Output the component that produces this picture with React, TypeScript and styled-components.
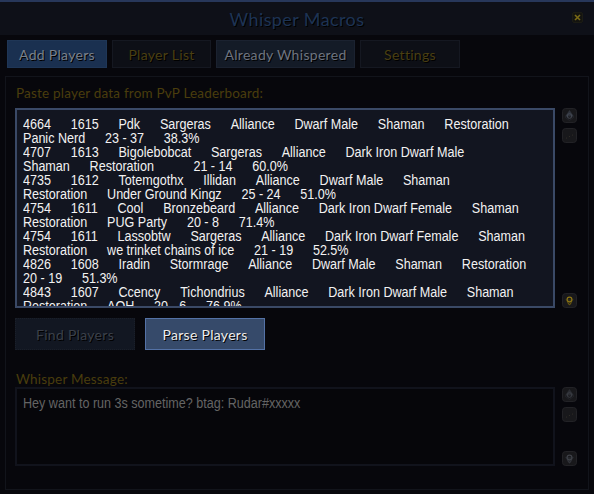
import styled, { createGlobalStyle } from 'styled-components';

const GlobalStyle = createGlobalStyle`
  html, body {
    margin: 0;
    padding: 0;
    background: #07070c;
  }
`;

const uiFont = `Lato, "Open Sans", sans-serif`;
const editFont = `"Liberation Sans", Arial, sans-serif`;

const Frame = styled.div`
  width: 594px;
  height: 494px;
  display: flex;
  flex-direction: column;
  background: #07070c;
  font-family: ${uiFont};
  overflow: hidden;
`;

const TitleBar = styled.div`
  height: 33px;
  border-top: 2px solid #27375a;
  background: #0e1018;
  display: grid;
  grid-template-columns: 1fr auto 1fr;
  align-items: center;
`;

const Title = styled.h1`
  grid-column: 2;
  margin: 0;
  font-size: 18px;
  font-weight: 400;
  letter-spacing: 0.4px;
  color: #1d3354;
  text-shadow: 1px 1px 0 #000;
`;

const CloseBtn = styled.button`
  grid-column: 3;
  justify-self: end;
  margin-right: 11px;
  margin-top: -2px;
  width: 11px;
  height: 11px;
  padding: 0;
  border: 1px solid #1c1c14;
  border-radius: 2px;
  background: #141410;
  display: flex;
  align-items: center;
  justify-content: center;
  svg {
    display: block;
  }
`;

const TabRow = styled.div`
  display: flex;
  gap: 5px;
  padding: 5px 0 0 7px;
`;

const Tab = styled.div<{ $active?: boolean; $muted?: boolean; $w: number }>`
  width: ${(p) => p.$w}px;
  height: 28px;
  box-sizing: border-box;
  display: flex;
  align-items: center;
  justify-content: center;
  font-size: 14px;
  letter-spacing: 0.3px;
  border: 1px solid
    ${(p) => (p.$active ? '#1f3656' : p.$muted ? '#1b2230' : '#151821')};
  background: ${(p) => (p.$active ? '#1a3050' : p.$muted ? '#141b27' : '#0d0f16')};
  color: ${(p) => (p.$active ? '#7a808b' : p.$muted ? '#6e7480' : '#4a3f12')};
  text-shadow: 1px 1px 0 #000;
`;

const Panel = styled.div`
  margin: 8px 5px 0 5px;
  height: 414px;
  box-sizing: border-box;
  border: 1px solid #12141b;
  padding: 9px 11px 0 9px;
  display: flex;
  flex-direction: column;
`;

const Label = styled.div<{ $gap?: number }>`
  margin-top: ${(p) => p.$gap ?? 0}px;
  height: 14px;
  line-height: 14px;
  padding-left: 1px;
  font-size: 13.5px;
  letter-spacing: 0.2px;
  color: #4a3d0d;
`;

const EditorRow = styled.div<{ $top: number; $h: number }>`
  margin-top: ${(p) => p.$top}px;
  height: ${(p) => p.$h}px;
  display: flex;
  gap: 7px;
`;

const EditBox = styled.div<{ $dim?: boolean }>`
  width: 540px;
  box-sizing: border-box;
  border: 2px solid ${(p) => (p.$dim ? '#11131c' : '#3a4966')};
  background: ${(p) => (p.$dim ? '#06060a' : '#121520')};
  padding: 7px 0 0 6px;
  overflow: hidden;
  color: ${(p) => (p.$dim ? '#646464' : '#f2f2f2')};
`;

/* WoW's edit boxes use a narrow Arial; squeeze Liberation Sans to match */
const Lines = styled.div`
  font-family: ${editFont};
  font-size: 14px;
  line-height: 14px;
  transform: scaleX(0.898);
  transform-origin: 0 0;
  width: 600px;
`;

const Line = styled.div`
  height: 14px;
  white-space: nowrap;
`;

const Cell = styled.span`
  display: inline-block;
  margin-right: 22px;
  white-space: pre;
`;

const ScrollCol = styled.div`
  width: 15px;
  display: flex;
  flex-direction: column;
  gap: 5px;
`;

const Spacer = styled.div`
  flex: 1;
`;

const ButtonRow = styled.div`
  margin-top: 10px;
  display: flex;
  gap: 10px;
`;

const Button = styled.button<{ $primary?: boolean }>`
  width: 120px;
  height: 32px;
  box-sizing: border-box;
  font-family: ${uiFont};
  font-size: 14px;
  letter-spacing: 0.3px;
  padding: 0;
  border: 1px ${(p) => (p.$primary ? 'solid #5472a6' : 'dotted #1a1f29')};
  background: ${(p) => (p.$primary ? '#364a6a' : '#121722')};
  color: ${(p) => (p.$primary ? '#ececec' : '#3b404a')};
  text-shadow: 1px 1px 0 #000;
`;

const rows: string[][] = [
  ['4664', '1615', 'Pdk', 'Sargeras', 'Alliance', 'Dwarf Male', 'Shaman', 'Restoration'],
  ['Panic Nerd', '23 - 37', '38.3%'],
  ['4707', '1613', 'Bigolebobcat', 'Sargeras', 'Alliance', 'Dark Iron Dwarf Male'],
  ['Shaman', 'Restoration', '', '21 - 14', '60.0%'],
  ['4735', '1612', 'Totemgothx', 'Illidan', 'Alliance', 'Dwarf Male', 'Shaman'],
  ['Restoration', 'Under Ground Kingz', '25 - 24', '51.0%'],
  ['4754', '1611', 'Cool', 'Bronzebeard', 'Alliance', 'Dark Iron Dwarf Female', 'Shaman'],
  ['Restoration', 'PUG Party', '20 - 8', '71.4%'],
  ['4754', '1611', 'Lassobtw', 'Sargeras', 'Alliance', 'Dark Iron Dwarf Female', 'Shaman'],
  ['Restoration', 'we trinket chains of ice', '21 - 19', '52.5%'],
  ['4826', '1608', 'Iradin', 'Stormrage', 'Alliance', 'Dwarf Male', 'Shaman', 'Restoration'],
  ['20 - 19', '51.3%'],
  ['4843', '1607', 'Ccency', 'Tichondrius', 'Alliance', 'Dark Iron Dwarf Male', 'Shaman'],
  ['Restoration', 'AOH', '20 - 6', '76.9%'],
];

const IconBase = ({ children }: { children?: React.ReactNode }) => (
  <svg width="15" height="15" viewBox="0 0 15 15">
    <rect x="0.5" y="0.5" width="14" height="14" rx="3" fill="#18181b" stroke="#222226" />
    {children}
  </svg>
);

const UpIcon = ({ dim }: { dim?: boolean }) => (
  <IconBase>
    <path d="M7.5 2 L12 8.5 L3 8.5 Z" fill={dim ? '#2a2c32' : '#2e323b'} />
    <circle cx="7.5" cy="8" r="2.3" fill="none" stroke={dim ? '#3a3d44' : '#444954'} strokeWidth="1" />
    <path d="M3 9 L7.5 12.5 L12 9" fill="none" stroke="#222329" strokeWidth="1" />
  </IconBase>
);

const DotsIcon = () => (
  <IconBase>
    <circle cx="4.5" cy="10" r="0.6" fill="#33302a" />
    <circle cx="7.5" cy="8.5" r="0.6" fill="#33302a" />
    <circle cx="10.5" cy="7" r="0.6" fill="#33302a" />
  </IconBase>
);

const DownIcon = ({ gold }: { gold?: boolean }) => (
  <IconBase>
    <path d="M3 6 L7.5 13 L12 6 Z" fill={gold ? '#2b2a1a' : '#25272c'} />
    <circle
      cx="7.5"
      cy="6.5"
      r="2.4"
      fill="none"
      stroke={gold ? '#8c7414' : '#3e4148'}
      strokeWidth="1.2"
    />
    <path
      d="M5.5 9.5 L7.5 12 L9.5 9.5"
      fill="none"
      stroke={gold ? '#6e5a10' : '#34363c'}
      strokeWidth="1"
    />
  </IconBase>
);

export default function App() {
  return (
    <>
      <GlobalStyle />
      <Frame>
        <TitleBar>
          <Title>Whisper Macros</Title>
          <CloseBtn aria-label="Close">
            <svg width="7" height="7" viewBox="0 0 7 7">
              <path d="M1 1 L6 6 M6 1 L1 6" stroke="#7a6a16" strokeWidth="1.6" />
            </svg>
          </CloseBtn>
        </TitleBar>

        <TabRow>
          <Tab $active $w={100}>Add Players</Tab>
          <Tab $w={99}>Player List</Tab>
          <Tab $muted $w={139}>Already Whispered</Tab>
          <Tab $w={100}>Settings</Tab>
        </TabRow>

        <Panel>
          <Label>Paste player data from PvP Leaderboard:</Label>
          <EditorRow $top={8} $h={200}>
            <EditBox>
              <Lines>
                {rows.map((r, i) => (
                  <Line key={i}>
                    {r.map((c, j) => (
                      <Cell key={j}>{c}</Cell>
                    ))}
                  </Line>
                ))}
              </Lines>
            </EditBox>
            <ScrollCol>
              <UpIcon />
              <DotsIcon />
              <Spacer />
              <DownIcon gold />
            </ScrollCol>
          </EditorRow>

          <ButtonRow>
            <Button>Find Players</Button>
            <Button $primary>Parse Players</Button>
          </ButtonRow>

          <Label $gap={22}>Whisper Message:</Label>
          <EditorRow $top={1} $h={79}>
            <EditBox $dim>
              <Lines>Hey want to run 3s sometime? btag: Rudar#xxxxx</Lines>
            </EditBox>
            <ScrollCol>
              <UpIcon dim />
              <DotsIcon />
              <Spacer />
              <DownIcon />
            </ScrollCol>
          </EditorRow>
        </Panel>
      </Frame>
    </>
  );
}
